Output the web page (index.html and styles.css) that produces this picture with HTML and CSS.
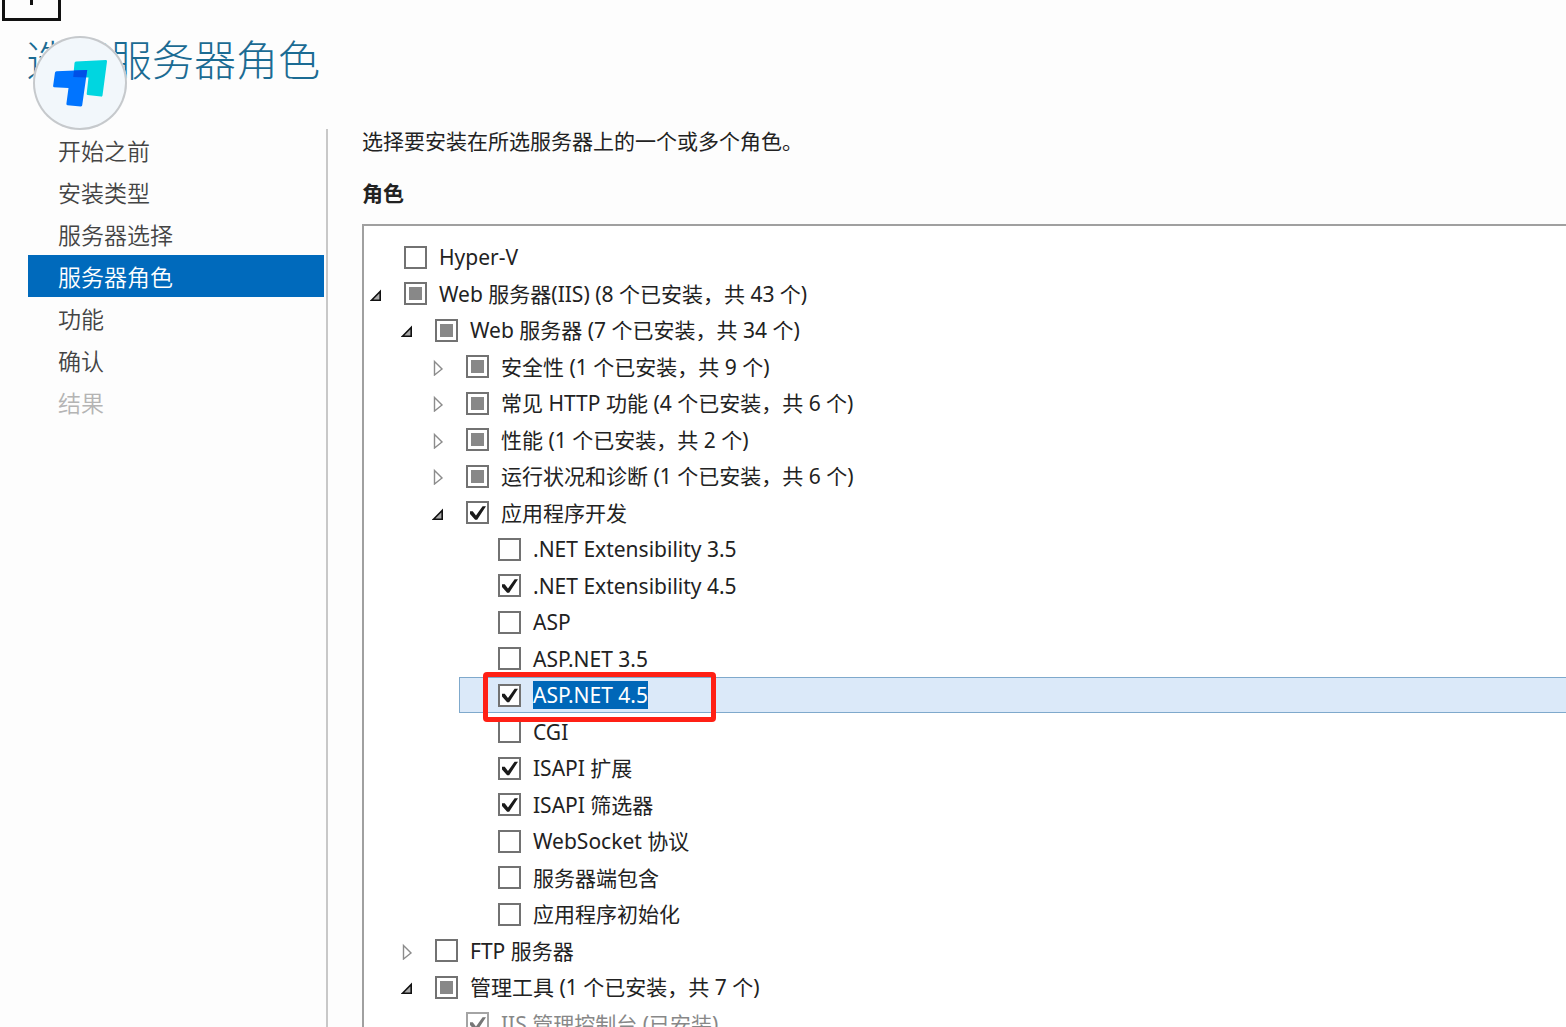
FILE: index.html
```html
<!DOCTYPE html>
<html lang="zh-CN">
<head>
  <meta charset="UTF-8" />
  <meta name="viewport" content="width=device-width, initial-scale=1" />
  <title>选择服务器角色</title>
  <link rel="stylesheet" href="styles.css">
</head>
<body>
  <!-- Shared arrow shapes for the tree -->
  <svg class="symbols" aria-hidden="true">
    <symbol id="open" viewBox="0 0 12 18">
      <path d="M1.5 15.2 L10.2 6.5 V15.2 Z" fill="#aaa" stroke="#111" stroke-width="1.6" />
    </symbol>
    <symbol id="closed" viewBox="0 0 12 18">
      <path d="M2.5 3.5 L10 11 L2.5 17 Z" fill="#fff" stroke="#8c8c8c" stroke-width="1.4" />
    </symbol>
  </svg>

  <div class="corner-box"><span class="corner-mark"></span></div>

  <header class="header">
    <h1>选择服务器角色</h1>
    <div class="float-logo">
      <svg viewBox="33 36 94 94" width="94" height="94" aria-hidden="true">
        <path d="M76 61.5 L106 60 Q107.200 60 107 61.500 L102.500 95.500 Q102.200 96.800 101 96.600 L87.500 95 Q86.500 94.800 86.700 93.800 L88.500 77.500 L73.200 77 L74.500 63 Q74.700 61.600 76 61.500 Z" fill="#00d6e0" />
        <path d="M56.500 71.200 L87.200 70 L82.200 105.300 Q82 106.500 80.800 106.400 L67.500 105.200 Q66.200 105 66.400 103.800 L68.500 88 L54 87.200 Q53 87 53.100 86 L55 72.600 Q55.200 71.300 56.500 71.200 Z" fill="#0074ff" />
        <path d="M74 70.500 L87.200 70 L86 77.600 L73.200 77 Z" fill="#0050e6" />
      </svg>
    </div>
  </header>

  <div class="wizard">
    <nav class="steps">
      <a href="#">开始之前</a>
      <a href="#">安装类型</a>
      <a href="#">服务器选择</a>
      <a href="#" class="active" aria-current="step">服务器角色</a>
      <a href="#">功能</a>
      <a href="#">确认</a>
      <a href="#" class="disabled">结果</a>
    </nav>

    <main class="content">
      <p class="intro">选择要安装在所选服务器上的一个或多个角色。</p>
      <h2>角色</h2>

      <ul class="tree">
        <li class="level-1">
          <label><input type="checkbox"><span>Hyper-V</span></label>
        </li>
        <li class="level-1">
          <button class="toggle" aria-label="折叠"><svg><use href="#open" /></svg></button>
          <label><input type="checkbox" class="partial"><span>Web 服务器(IIS) (8 个已安装，共 43 个)</span></label>
        </li>
        <li class="level-2">
          <button class="toggle" aria-label="折叠"><svg><use href="#open" /></svg></button>
          <label><input type="checkbox" class="partial"><span>Web 服务器 (7 个已安装，共 34 个)</span></label>
        </li>
        <li class="level-3">
          <button class="toggle" aria-label="展开"><svg><use href="#closed" /></svg></button>
          <label><input type="checkbox" class="partial"><span>安全性 (1 个已安装，共 9 个)</span></label>
        </li>
        <li class="level-3">
          <button class="toggle" aria-label="展开"><svg><use href="#closed" /></svg></button>
          <label><input type="checkbox" class="partial"><span>常见 HTTP 功能 (4 个已安装，共 6 个)</span></label>
        </li>
        <li class="level-3">
          <button class="toggle" aria-label="展开"><svg><use href="#closed" /></svg></button>
          <label><input type="checkbox" class="partial"><span>性能 (1 个已安装，共 2 个)</span></label>
        </li>
        <li class="level-3">
          <button class="toggle" aria-label="展开"><svg><use href="#closed" /></svg></button>
          <label><input type="checkbox" class="partial"><span>运行状况和诊断 (1 个已安装，共 6 个)</span></label>
        </li>
        <li class="level-3">
          <button class="toggle" aria-label="折叠"><svg><use href="#open" /></svg></button>
          <label><input type="checkbox" checked><span>应用程序开发</span></label>
        </li>
        <li class="level-4">
          <label><input type="checkbox"><span>.NET Extensibility 3.5</span></label>
        </li>
        <li class="level-4">
          <label><input type="checkbox" checked><span>.NET Extensibility 4.5</span></label>
        </li>
        <li class="level-4">
          <label><input type="checkbox"><span>ASP</span></label>
        </li>
        <li class="level-4">
          <label><input type="checkbox"><span>ASP.NET 3.5</span></label>
        </li>
        <li class="level-4 selected">
          <label><input type="checkbox" checked><span>ASP.NET 4.5</span></label>
          <div class="callout"></div>
        </li>
        <li class="level-4">
          <label><input type="checkbox"><span>CGI</span></label>
        </li>
        <li class="level-4">
          <label><input type="checkbox" checked><span>ISAPI 扩展</span></label>
        </li>
        <li class="level-4">
          <label><input type="checkbox" checked><span>ISAPI 筛选器</span></label>
        </li>
        <li class="level-4">
          <label><input type="checkbox"><span>WebSocket 协议</span></label>
        </li>
        <li class="level-4">
          <label><input type="checkbox"><span>服务器端包含</span></label>
        </li>
        <li class="level-4">
          <label><input type="checkbox"><span>应用程序初始化</span></label>
        </li>
        <li class="level-2">
          <button class="toggle" aria-label="展开"><svg><use href="#closed" /></svg></button>
          <label><input type="checkbox"><span>FTP 服务器</span></label>
        </li>
        <li class="level-2">
          <button class="toggle" aria-label="折叠"><svg><use href="#open" /></svg></button>
          <label><input type="checkbox" class="partial"><span>管理工具 (1 个已安装，共 7 个)</span></label>
        </li>
        <li class="level-3 installed">
          <label><input type="checkbox" checked disabled><span>IIS 管理控制台 (已安装)</span></label>
        </li>
      </ul>
    </main>
  </div>

  <script>
    // The half-checked state can only be set from script
    document.querySelectorAll('.partial').forEach((box) => {
      box.indeterminate = true;
    });
  </script>
</body>
</html>
```
FILE: styles.css
```css
/* ===== Page ===== */
* {
  box-sizing: border-box;
}
body {
  margin: 0;
  height: 100vh;
  display: flex;
  flex-direction: column;
  overflow: hidden;
  background-color: #fdfdfd;
  color: #222;
  font-family: "Noto Sans", "Noto Sans CJK SC", sans-serif;
  font-size: 21px;
}
.symbols {
  position: absolute;
  width: 0;
  height: 0;
}

/* ===== Header ===== */
.corner-box {
  position: absolute;
  top: 0;
  left: 2px;
  width: 59px;
  height: 21px;
  border: 3px solid #111;
  border-top: none;
  display: flex;
  justify-content: center;
}
.corner-mark {
  width: 3px;
  height: 5px;
  background-color: #111;
}
.header {
  position: relative;
  flex: none;
  height: 129px;
  padding: 30px 0 0 26px;
}
h1 {
  margin: 0;
  font-family: "Noto Sans CJK SC", sans-serif;
  font-size: 42px;
  font-weight: 300;
  line-height: 56px;
  color: #1b6b93;
}
.float-logo {
  position: absolute;
  top: 36px;
  left: 33px;
  width: 94px;
  height: 94px;
  border-radius: 50%;
  background-color: #f2f7fb;
  box-shadow: inset 0 0 0 2px #c6c9cc;
}
.float-logo svg {
  display: block;
}

/* ===== Steps on the left ===== */
.wizard {
  flex: 1;
  min-height: 0;
  display: flex;
}
.steps {
  flex: none;
  width: 328px;
  padding: 0 2px 0 28px;
  border-right: 2px solid #c8c8c8;
}
.steps a {
  display: block;
  padding-left: 30px;
  font-family: "Noto Sans CJK SC", sans-serif;
  font-size: 23px;
  font-weight: 350;
  line-height: 42px;
  color: #444;
  text-decoration: none;
}
.steps .active {
  background-color: #006abc;
  color: #fff;
}
.steps .disabled {
  color: #b4b4b4;
}

/* ===== Roles ===== */
.content {
  flex: 1;
  min-width: 0;
  display: flex;
  flex-direction: column;
  padding-left: 34px;
}
.intro,
h2 {
  margin: 0;
  font-family: "Noto Sans CJK SC", sans-serif;
  font-size: 21px;
  line-height: 22px;
}
h2 {
  margin: 30px 0 21px;
}
.tree {
  flex: 1;
  min-height: 0;
  margin: 0;
  padding: 13px 0 0 1px;
  list-style: none;
  background-color: #fff;
  border: 2px solid #a0a0a0;
  border-width: 2px 0 0 2px;
}
.tree li {
  position: relative;
  display: flex;
  align-items: center;
  height: 36px;
  padding-left: 38px;
  border: 1px solid transparent;
  border-right: none;
}
.tree li:nth-child(even) {
  height: 37px;
}
.tree .level-2 {
  margin-left: 31px;
}
.tree .level-3 {
  margin-left: 62px;
}
.tree .level-4 {
  margin-left: 94px;
}
.tree label {
  display: flex;
  align-items: center;
  gap: 12px;
  white-space: nowrap;
}
.tree label span {
  line-height: 28px;
}
.toggle {
  flex: none;
  width: 34px;
  height: 18px;
  margin-left: -34px;
  padding: 0;
  border: none;
  background: none;
}
.toggle svg {
  display: block;
  width: 12px;
  height: 18px;
}

/* ===== Check boxes ===== */
.tree input {
  appearance: none;
  flex: none;
  display: grid;
  place-items: center;
  width: 23px;
  height: 23px;
  margin: 0;
  border: 2px solid #727272;
  background-color: #fff;
}
.tree input:checked::before {
  content: "";
  width: 17px;
  height: 15px;
  background-color: #1a1a1a;
  clip-path: polygon(6% 42%, 22% 42%, 41% 70%, 80% 8%, 100% 8%, 48% 98%, 36% 98%, 6% 60%);
}
.tree input:indeterminate::before {
  content: "";
  width: 13px;
  height: 13px;
  background-color: #888;
}

/* ===== Row states ===== */
.tree .selected {
  z-index: 1;
  background-color: #dbe9f9;
  border-color: #7fa9cc;
}
.selected label span {
  background-color: #0067b8;
  color: #fff;
}
.callout {
  position: absolute;
  top: -6px;
  left: 23px;
  width: 233px;
  height: 50px;
  border: 5px solid #ff2015;
  border-radius: 4px;
}
.installed {
  color: #888;
}
.tree .installed input {
  border-color: #a4a4a4;
}
.installed input:checked::before {
  background-color: #777;
}
```
